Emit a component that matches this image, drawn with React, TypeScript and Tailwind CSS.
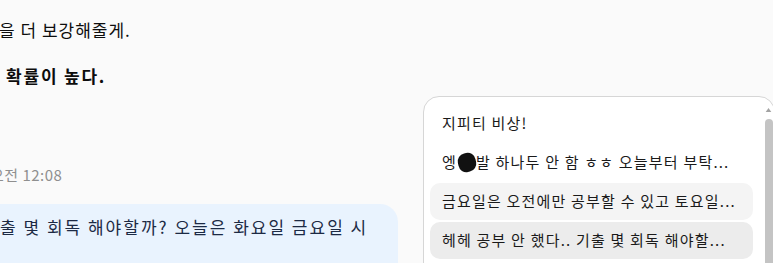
export default function App() {
  const items = [
    { text: "지피티 비상!", bg: "" },
    { text: "엥", blot: true, rest: "발 하나두 안 함 ㅎㅎ 오늘부터 부탁...", bg: "" },
    { text: "금요일은 오전에만 공부할 수 있고 토요일...", bg: "bg-[#f4f4f4]" },
    { text: "헤헤 공부 안 했다.. 기출 몇 회독 해야할...", bg: "bg-[#ececec]" },
  ];

  return (
    <div
      className="relative w-[773px] h-[263px] overflow-hidden bg-[#fafafa] text-[#0d0d0d]"
      style={{ fontFamily: '"Noto Sans CJK KR", "Liberation Sans", sans-serif' }}
    >
      {/* chat column */}
      <div className="flex flex-col">
        <p className="mt-[17px] -ml-[1px] text-[17px] leading-[26px] tracking-[1px] whitespace-nowrap">을 더 보강해줄게.</p>
        <p className="mt-[20px] ml-[6px] text-[17px] leading-[26px] tracking-[1.8px] font-bold whitespace-nowrap">확률이 높다.</p>
        <p className="mt-[76px] -ml-[10px] text-[15px] leading-[20px] tracking-[0.5px] text-[#8f8f8f] whitespace-nowrap">오전 12:08</p>
        <div className="mt-[19px] w-[398px] h-[80px] rounded-r-[18px] bg-[#e9f3fe] pt-[11px]">
          <p className="text-[17px] leading-[24px] tracking-[2px] text-[#1c2a44] whitespace-nowrap">출 몇 회독 해야할까? 오늘은 화요일 금요일 시</p>
        </div>
      </div>

      {/* suggestion popup */}
      <div className="absolute left-[423px] top-[96px] w-[352px] h-[200px] rounded-[16px] border border-[#d6d6d6] bg-white overflow-hidden flex">
        <div className="flex-1 flex flex-col gap-[2px] pl-[6px] pr-[10px] pt-[8px]">
          {items.map((it, i) => (
            <div
              key={i}
              className={`h-[37px] rounded-[10px] px-[12px] flex items-center text-[15px] tracking-[1.2px] text-[#1a1a1a] whitespace-nowrap ${it.bg}`}
            >
              {it.blot ? (
                <span className="flex items-center">
                  {it.text}
                  <span className="inline-block w-[18px] h-[19px] ml-[1px] rounded-[8px] bg-[#111] rotate-[-12deg]" />
                  {it.rest}
                </span>
              ) : (
                it.text
              )}
            </div>
          ))}
        </div>
        <div className="w-[11px] flex flex-col items-center pt-[11px]">
          <svg width="7" height="5" viewBox="0 0 7 5">
            <path d="M3.5 0 L7 5 L0 5 Z" fill="#a3a3a3" />
          </svg>
          <div className="mt-[7px] w-[8px] h-[200px] rounded-[4px] bg-[#c4c4c4]" />
        </div>
      </div>
    </div>
  );
}
